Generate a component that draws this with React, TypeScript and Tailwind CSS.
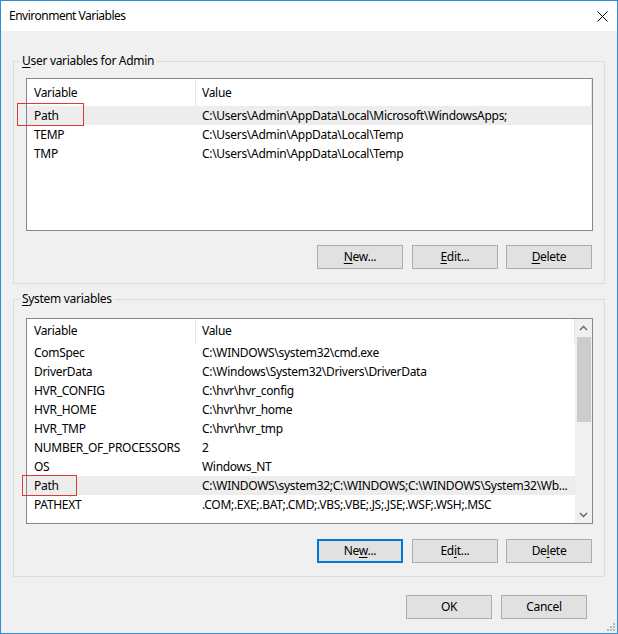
import React from "react";

const userVars = [
  { name: "Path", value: "C:\\Users\\Admin\\AppData\\Local\\Microsoft\\WindowsApps;", marked: true },
  { name: "TEMP", value: "C:\\Users\\Admin\\AppData\\Local\\Temp" },
  { name: "TMP", value: "C:\\Users\\Admin\\AppData\\Local\\Temp" },
];

const systemVars = [
  { name: "ComSpec", value: "C:\\WINDOWS\\system32\\cmd.exe" },
  { name: "DriverData", value: "C:\\Windows\\System32\\Drivers\\DriverData" },
  { name: "HVR_CONFIG", value: "C:\\hvr\\hvr_config" },
  { name: "HVR_HOME", value: "C:\\hvr\\hvr_home" },
  { name: "HVR_TMP", value: "C:\\hvr\\hvr_tmp" },
  { name: "NUMBER_OF_PROCESSORS", value: "2" },
  { name: "OS", value: "Windows_NT" },
  { name: "Path", value: "C:\\WINDOWS\\system32;C:\\WINDOWS;C:\\WINDOWS\\System32\\Wb...", marked: true },
  { name: "PATHEXT", value: ".COM;.EXE;.BAT;.CMD;.VBS;.VBE;.JS;.JSE;.WSF;.WSH;.MSC" },
];

type Row = { name: string; value: string; marked?: boolean };

// underlined access key inside a label
const Key = ({ children }: { children: React.ReactNode }) => (
  <span className="underline underline-offset-[2px] decoration-[1px]">{children}</span>
);

const Btn = ({ children, focused, className = "" }: { children: React.ReactNode; focused?: boolean; className?: string }) => (
  <button
    className={`w-[86px] h-[24px] flex items-center justify-center bg-[#e1e1e1] ${
      focused ? "border-2 border-[#0078d7]" : "border border-[#adadad]"
    } ${className}`}
  >
    {children}
  </button>
);

// red highlight frame drawn over a row
const Mark = ({ className }: { className: string }) => (
  <div className={`absolute pointer-events-none ring-1 ring-inset ring-[#dc3a3a] ${className}`} />
);

const VarList = ({ rows, headerH, scroll }: { rows: Row[]; headerH: string; scroll?: boolean }) => (
  <div className="flex w-full h-full border border-[#828790] bg-white overflow-hidden">
    <div className="flex-1 flex flex-col min-w-0">
      {/* Header */}
      <div className={`flex ${headerH} shrink-0`}>
        <div className="w-[169px] pl-[7px] flex items-center border-r border-[#e5e5e5]">Variable</div>
        <div className="flex-1 pl-[6px] flex items-center border-r border-[#e5e5e5]">Value</div>
      </div>
      {rows.map((r) => (
        <div key={r.name} className={`flex h-[19px] shrink-0 items-center ${r.marked ? "bg-[#ededed]" : ""}`}>
          <div className="w-[169px] pl-[7px] shrink-0">{r.name}</div>
          <div className="flex-1 pl-[6px] whitespace-nowrap overflow-hidden">{r.value}</div>
        </div>
      ))}
    </div>
    {scroll && (
      <div className="w-[17px] shrink-0 bg-[#f0f0f0] flex flex-col items-center">
        <div className="h-[17px] flex items-center justify-center">
          <svg width="9" height="6" viewBox="0 0 9 6">
            <polyline points="1,5 4.5,1.5 8,5" fill="none" stroke="#606060" strokeWidth="1.3" />
          </svg>
        </div>
        <div className="mt-[1px] w-[14px] h-[85px] bg-[#cdcdcd]" />
        <div className="flex-1" />
        <div className="h-[17px] flex items-center justify-center">
          <svg width="9" height="6" viewBox="0 0 9 6">
            <polyline points="1,1 4.5,4.5 8,1" fill="none" stroke="#606060" strokeWidth="1.3" />
          </svg>
        </div>
      </div>
    )}
  </div>
);

export default function App() {
  return (
    <div className="relative w-[618px] h-[634px] border border-[#2b8fd6] bg-[#f0f0f0] flex flex-col text-[12px] tracking-[-0.3px] text-black font-['Noto_Sans',sans-serif] leading-[16px] select-none">
      {/* Title bar */}
      <div className="h-[30px] bg-white flex items-center justify-between pl-[8px] pr-[9px] shrink-0">
        <span className="tracking-[-0.5px]">Environment Variables</span>
        <svg width="11" height="11" viewBox="0 0 11 11">
          <path d="M0.5 0.5 L10.5 10.5 M10.5 0.5 L0.5 10.5" stroke="#000" strokeWidth="1" />
        </svg>
      </div>

      <div className="flex flex-col px-[12px]">
        {/* User variables */}
        <div className="relative mt-[30px] h-[223px] border border-[#dcdcdc] pt-[16px] pl-[12px] pr-[11px] pb-[14px] flex flex-col">
          <span className="absolute -top-[9px] left-[6px] px-[2px] bg-[#f0f0f0]">
            <Key>U</Key>ser variables for Admin
          </span>
          <div className="relative h-[153px]">
            <VarList rows={userVars} headerH="h-[27px]" />
            <Mark className="left-[-9px] top-[25px] w-[67px] h-[23px]" />
          </div>
          <div className="flex justify-end mt-[14px] mr-[1px]">
            <Btn><span><Key>N</Key>ew...</span></Btn>
            <Btn className="ml-[9px]"><span><Key>E</Key>dit...</span></Btn>
            <Btn className="ml-[8px]"><span><Key>D</Key>elete</span></Btn>
          </div>
        </div>

        {/* System variables */}
        <div className="relative mt-[15px] h-[278px] border border-[#dcdcdc] pt-[18px] pl-[12px] pr-[11px] pb-[13px] flex flex-col">
          <span className="absolute -top-[9px] left-[6px] px-[2px] bg-[#f0f0f0]">
            <Key>S</Key>ystem variables
          </span>
          <div className="relative h-[206px]">
            <VarList rows={systemVars} headerH="h-[24px]" scroll />
            <Mark className="left-[-4px] top-[157px] w-[55px] h-[21px]" />
          </div>
          <div className="flex justify-end mt-[15px] mr-[1px]">
            <Btn focused><span>Ne<Key>w</Key>...</span></Btn>
            <Btn className="ml-[9px]"><span>Ed<Key>i</Key>t...</span></Btn>
            <Btn className="ml-[8px]"><span>De<Key>l</Key>ete</span></Btn>
          </div>
        </div>
      </div>

      {/* Dialog buttons */}
      <div className="flex justify-end mt-[18px] pr-[30px]">
        <Btn>OK</Btn>
        <Btn className="ml-[9px]">Cancel</Btn>
      </div>

      {/* Size grip */}
      <svg className="absolute right-[2px] bottom-[2px]" width="8" height="8" viewBox="0 0 8 8">
        <rect x="6" y="0" width="2" height="2" fill="#b8b8b8" />
        <rect x="3" y="3" width="2" height="2" fill="#b8b8b8" />
        <rect x="6" y="3" width="2" height="2" fill="#b8b8b8" />
        <rect x="0" y="6" width="2" height="2" fill="#b8b8b8" />
        <rect x="3" y="6" width="2" height="2" fill="#b8b8b8" />
        <rect x="6" y="6" width="2" height="2" fill="#b8b8b8" />
      </svg>
    </div>
  );
}
